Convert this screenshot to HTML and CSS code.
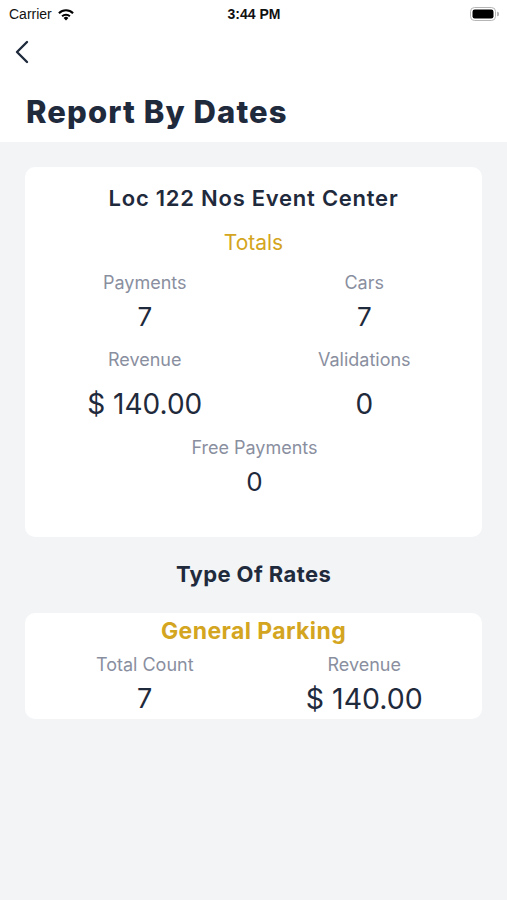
FILE: index.html
```html
<!DOCTYPE html>
<html lang="en">
<head>
  <meta charset="UTF-8">
  <meta name="viewport" content="width=device-width, initial-scale=1.0">
  <title>Report By Dates</title>
  <link rel="stylesheet" href="styles.css">
</head>
<body>
<div class="header">
  <div class="status-bar">
    <div class="status-left">
      <span>Carrier</span>
      <svg class="wifi" width="18" height="13" viewBox="0 0 18 13">
        <path d="M9 12.5 L6.6 9.9 A3.4 3.4 0 0 1 11.4 9.9 Z" fill="#000"/>
        <path d="M4.4 7.6 A6.6 6.6 0 0 1 13.6 7.6 L12.2 9.1 A4.6 4.6 0 0 0 5.8 9.1 Z" fill="#000"/>
        <path d="M1.2 4.4 A11 11 0 0 1 16.8 4.4 L15.3 5.9 A8.8 8.8 0 0 0 2.7 5.9 Z" fill="#000"/>
      </svg>
    </div>
    <div class="status-time">3:44 PM</div>
    <div class="status-right">
      <svg width="29" height="14" viewBox="0 0 29 14">
        <rect x="0.5" y="0.5" width="25" height="13" rx="4" fill="none" stroke="#b5b5b5"/>
        <rect x="2.5" y="2.5" width="21" height="9" rx="2.2" fill="#000"/>
        <path d="M27 4.8 a2 2 0 0 1 0 4.4 Z" fill="#b5b5b5"/>
      </svg>
    </div>
  </div>
  <div class="nav-bar">
    <svg class="back" width="16" height="24" viewBox="0 0 16 24">
      <path d="M13 2 L3 12 L13 22" fill="none" stroke="#1f2a3c" stroke-width="2.4" stroke-linecap="round" stroke-linejoin="round"/>
    </svg>
  </div>
  <h1 class="page-title">Report By Dates</h1>
</div>

<div class="content">
  <div class="card">
    <div class="card-title">Loc 122 Nos Event Center</div>
    <div class="section-title">Totals</div>
    <div class="stats">
      <div class="stat">
        <div class="stat-label">Payments</div>
        <div class="stat-value">7</div>
      </div>
      <div class="stat">
        <div class="stat-label">Cars</div>
        <div class="stat-value">7</div>
      </div>
      <div class="stat">
        <div class="stat-label">Revenue</div>
        <div class="stat-value big">$ 140.00</div>
      </div>
      <div class="stat">
        <div class="stat-label">Validations</div>
        <div class="stat-value big">0</div>
      </div>
      <div class="stat wide">
        <div class="stat-label">Free Payments</div>
        <div class="stat-value">0</div>
      </div>
    </div>
  </div>

  <h2 class="rates-title">Type Of Rates</h2>

  <div class="card rate-card">
    <div class="rate-name">General Parking</div>
    <div class="stats">
      <div class="stat">
        <div class="stat-label">Total Count</div>
        <div class="stat-value">7</div>
      </div>
      <div class="stat">
        <div class="stat-label">Revenue</div>
        <div class="stat-value money">$ 140.00</div>
      </div>
    </div>
  </div>
</div>
</body>
</html>
```

FILE: styles.css
```css
body {
  margin: 0;
  font-family: Inter, "Noto Sans", sans-serif;
  background-color: #f2f4f6;
  color: #1f2a3c;
}
.header {
  background-color: #fff;
  height: 142px;
  overflow: hidden;
}
.status-bar {
  height: 28px;
  display: flex;
  align-items: center;
  justify-content: space-between;
  padding: 0 8px 0 9px;
  font-family: "Liberation Sans", Arial, sans-serif;
  font-size: 14px;
  color: #111;
}
.status-left {
  display: flex;
  align-items: center;
  gap: 5px;
  width: 110px;
}
.status-time {
  font-weight: bold;
}
.status-right {
  width: 110px;
  display: flex;
  justify-content: flex-end;
}
.nav-bar {
  height: 48px;
  padding-left: 14px;
  display: flex;
  align-items: center;
}
.page-title {
  margin: 17px 0 0 26px;
  font-size: 31px;
  line-height: 38px;
  font-weight: 800;
  letter-spacing: 1.1px;
  color: #1f2a3c;
}
.content {
  padding: 25px 25px;
}
.card {
  background-color: #fff;
  border-radius: 10px;
  padding: 17px 0 38px;
  text-align: center;
}
.card-title {
  font-size: 22px;
  font-weight: 600;
  line-height: 28px;
  letter-spacing: 0.75px;
}
.section-title {
  color: #d4a520;
  font-size: 21px;
  margin-top: 17px;
  line-height: 28px;
}
.stats {
  display: grid;
  grid-template-columns: 1fr 1fr;
  padding: 0 8px 0 10px;
}
.stat {
  display: flex;
  flex-direction: column;
  align-items: center;
}
.stat.wide {
  grid-column: span 2;
}
.stat-label {
  color: #8a8f9f;
  font-size: 18px;
  line-height: 22px;
  margin-top: 15px;
}
.stat-value {
  font-size: 26px;
  line-height: 34px;
  margin-top: 6px;
  color: #1f2a3c;
}
.stat-value.big {
  font-size: 28px;
  margin-top: 16px;
}
.stat.wide .stat-label {
  margin-top: 16px;
}
.rates-title {
  margin: 23px 0 25px;
  text-align: center;
  font-size: 22px;
  font-weight: 700;
  line-height: 28px;
  letter-spacing: 0.4px;
}
.rate-card {
  padding: 4px 0 3px;
}
.rate-name {
  color: #d4a520;
  font-size: 23px;
  font-weight: 700;
  line-height: 28px;
  letter-spacing: 0.4px;
}
.rate-card .stat-label {
  margin-top: 9px;
}
.rate-card .stat-value {
  font-size: 27px;
}
.rate-card .stat-value.money {
  font-size: 28.5px;
}
```
